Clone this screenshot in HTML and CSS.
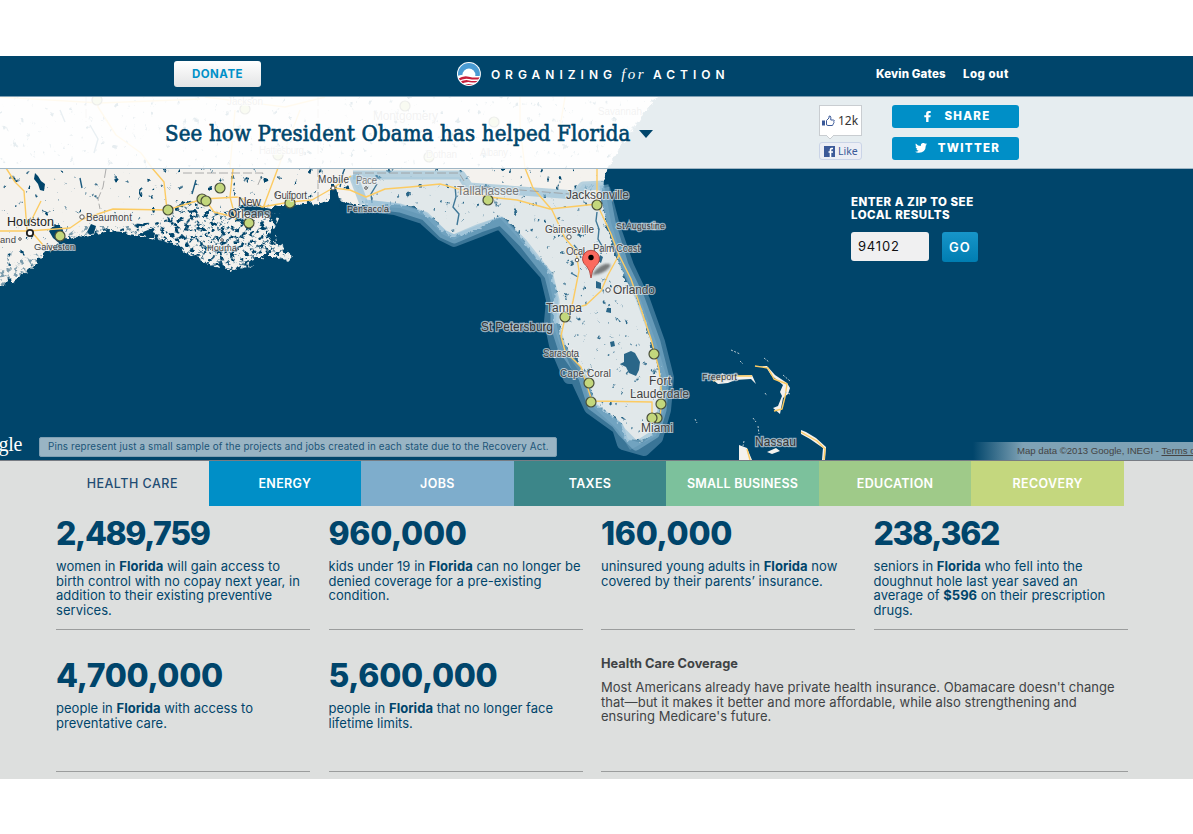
FILE: index.html
```html
<!DOCTYPE html>
<html lang="en">
<head>
<meta charset="utf-8">
<title>Organizing for Action</title>
<link rel="stylesheet" href="styles.css">
</head>
<body>
<header class="topbar">
  <a class="donate">DONATE</a>
  <div class="brand">
    <svg class="brand-mark" viewBox="0 0 24 24">
      <defs><clipPath id="disc"><circle cx="12" cy="12" r="11"/></clipPath></defs>
      <circle cx="12" cy="12" r="12" fill="#fff"/>
      <g clip-path="url(#disc)">
        <path d="M0 0h24v14H0z" fill="#4a9bd3"/>
        <circle cx="12" cy="13" r="6.500" fill="#fff"/>
        <path d="M0 14q6-2 12-.5t12 1v10H0z" fill="#fff"/>
        <path d="M0 17.500q6-4.500 12-2.800T24 15v2q-6 1.200-12 0T0 20zM1 21.500q6-4.500 11-3t12-.5v2q-6 1-11 .2T2 23.500zM6 24q3-2.500 8-1.700t8-1V24z" fill="#c8203c"/>
      </g>
    </svg>
    <span class="brand-word w1">ORGANIZING</span><span class="brand-for">for</span><span class="brand-word w2">ACTION</span>
  </div>
  <nav class="user"><a class="name">Kevin Gates</a><a>Log out</a></nav>
</header>

<section class="map-area">
  <svg class="map" viewBox="0 97 1193 363">
    <defs>
      <path id="landshape" d="M-20 80V294L0 287 12 282 27 272 36 263 44 255 53 248 61 244 57 237 49 230 56 224 63 232 70 240 85 235 105 231 125 232 142 236 155 239 170 243 180 247 190 255 203 259 209 266 222 265 230 271 245 264 258 256 275 256 287 262 293 256 280 248 270 242 266 232 275 225 270 218 262 210 272 206 290 206 305 204 320 203 329 200 332 185 336 185 340 200 352 204 372 207 395 204 410 206 425 214 435 220 443 231 452 238 460 235 470 232 483 226 497 217 505 219 515 227 525 243 537 260 547 266 552 278 556 290 555 300 550 314 556 322 562 325 560 335 568 350 578 362 582 372 590 385 592 400 605 412 620 424 625 440 640 441 652 436 657 420 662 395 660 370 652 345 645 320 637 300 624 280 620 265 612 245 605 220 602 200 604 175 609 168 618 150 629 135 642 115 657 97V80Z"/>
      <clipPath id="land"><use href="#landshape"/></clipPath>
      <filter id="rough" x="-2%" y="-2%" width="104%" height="104%">
        <feTurbulence type="fractalNoise" baseFrequency=".16" numOctaves="3" seed="4"/>
        <feDisplacementMap in="SourceGraphic" scale="9" xChannelSelector="R" yChannelSelector="G"/>
      </filter>
      <filter id="specks" x="0" y="0" width="100%" height="100%" color-interpolation-filters="sRGB">
        <feTurbulence type="fractalNoise" baseFrequency=".16 .12" numOctaves="4" seed="11"/>
        <feColorMatrix values="0 0 0 0 0  0 0 0 0 .27  0 0 0 0 .42  9 0 0 0 -6.300"/>
        <feComposite in2="SourceGraphic" operator="in"/>
      </filter>
      <filter id="marsh" x="0" y="0" width="100%" height="100%" color-interpolation-filters="sRGB">
        <feTurbulence type="fractalNoise" baseFrequency=".2 .22" numOctaves="4" seed="7"/>
        <feColorMatrix values="0 0 0 0 0  0 0 0 0 .27  0 0 0 0 .42  7 0 0 0 -3.600"/>
        <feComposite in2="SourceGraphic" operator="in"/>
      </filter>
      <filter id="islets" x="0" y="0" width="100%" height="100%" color-interpolation-filters="sRGB">
        <feTurbulence type="fractalNoise" baseFrequency=".2" numOctaves="4" seed="3"/>
        <feColorMatrix values="0 0 0 0 .93  0 0 0 0 .94  0 0 0 0 .93  8 0 0 0 -4.400"/>
        <feComposite in2="SourceGraphic" operator="in"/>
      </filter>
      <filter id="soft"><feGaussianBlur stdDeviation="1"/></filter>
    </defs>
    <rect y="97" width="1193" height="363" fill="#00456b"/>
    <use href="#landshape" fill="#f4f2ee" filter="url(#rough)"/>
    <path filter="url(#islets)" d="M195 240 268 212 281 214 273 232 284 246 292 258 284 264 270 255 250 268 230 269 214 267Z"/>
    <g clip-path="url(#land)">
      <path filter="url(#specks)" d="M0 97H670V450H0Z"/>
      <path filter="url(#marsh)" d="M130 224 160 222 180 200 195 206 225 212 250 205 290 204 300 270 200 270 140 238Z"/>
      <path filter="url(#marsh)" opacity=".5" d="M0 270 60 240 80 226 130 226 150 240 0 290Z"/>
    </g>
    <g class="lake">
      <path d="M35 173l3 3 3 5 4 3-1 7-4-1-2-6-4-5zM238 206q8-3 12-1 10-2 14 3 8 0 9 3-5 6-18 4-9 1-17-9zM49 231l7-3 6-1 3 11-6 5-6-5zM624 354l7-3 4 2 5 9-1 8-3 6-7-3-3-6-6-3 4-2zM610 342l4-1 1 5-4 1zM607 308l4 0 0 5-5-1zM596 281l5 2 0 6-5-1zM600 255l3 2-2 6-3-2zM143 232l5-2 7 3-1 5-7 0zM91 224l5 2-2 7-4 2-3-3zM330 188h6l4 14-1 7h-9z"/>
      <path class="river" d="M597 212l-1 9 3 8-1 10 4 7-1 8M455 186l1 11-3 10 6 7-2 11M340 187l3-14 2-5M574 245l5 6 2 7M571 273l7 4M377 184l-6 10 1 9M80 178l2 10M196 180l-4 14M60 110l5 12M90 125l8 14-4 14"/>
    </g>
    <g class="florida">
      <path class="state-fill" d="M350 177H460L468 187 575 194 583 184 604 183 611 222 624 265 640 298 656 342 667 378 664 410 656 436 630 450 618 430 590 404 582 375 560 345 553 325 553 300 547 270 520 240 500 218 480 225 454 240 442 234 425 216 400 208 365 206Z"/>
      <path class="band north" d="M353 175H461L469 187 575 195 583 186 604 185"/>
      <path class="band north" d="M353 175 364 204"/>
      <path class="band wide" d="M604 185 611 222 624 265 640 298 656 342 665 378 662 410 655 434 636 446 622 432 616 424 592 406 583 378 562 348 555 326 555 300 549 276 523 243 501 221 480 228 454 239 443 234 425 216 400 208 365 204"/>
      <path class="band outer" d="M604 188 614 226 628 266 644 300 659 342 668 378 665 410 657 438 644 450 623 444 618 428 590 408 576 378 569 378 555 345 550 322 552 300 546 275 521 247 500 223 480 231 454 241 442 235 423 218 395 209 368 206"/>
    </g>
    <g class="road">
      <path d="M0 231H28L70 228 83 219 113 209 167 210 203 199 238 197 262 207 290 202 312 200 333 188 350 190 366 197 385 189 410 187 440 184 455 188 488 197 517 200 550 209 597 204M6 168l9 14 9 9 3 39M31 231l12 14 10 4M29 225l12-24M152 168l12 14 3 28M204 198l10 14 20 5M233 169l-3 28 6 23M278 168l-15 40M333 188l18-12M525 168l8 20 19 22 13 28 11 13 3 20-6 30-4 17M597 168v36l14 30 8 21-11 20-7 16-15 14-20 5M619 255l12 24 20 60 8 30 3 28-2 20M565 318l-4 18 4 15 16 16 11 34 60 1v17M565 97l-5 30M520 97v30l5 41M98 97v10l18 28 25 18 11 15M205 97l80 10 40-10M235 110l-5 58M300 110l-22 58M0 97l100 6 100-4"/>
    </g>
    <path class="boundary" d="M106 169l-3 18-5 12 2 10M183 173h80l-6 14M318 168v36M353 173h106l5 8M470 186l100 8M86 97v25M318 97v60"/>
    <g class="isles">
      <path d="M712 379l8-1 2-5 4 3 26-1 4 9-5-5-16 1-7 3-10 1zM754 366l13 0 8 9 12 8 3 5-2 6-5 4-3 16-7-6 5-2 4-10-2-4 3-7-12-10-5-8zM739 445l8 3 5 12h-13zM767 452l9-4 4 3-8 3zM801 430l5 2 10 6 10 9-1 13h-3l1-12-13-9-9-5z"/>
      <path class="road" d="M713 381l15-5h24M755 366l13 2 6 11 13 5-2 13-3 12-8 2M747 449l3 11M801 432l16 9 8 8-1 11"/>
      <path class="cay" d="M731 350l9 4M764 358l5 4M783 375l7 6M785 392l5 2M765 393l2 3M695 419l2 4M753 418l3 4M758 426l1 8M744 441l-1 5M740 361l3 3"/>
    </g>
    <g class="pins">
      <circle cx="60" cy="236" r="5"/><circle cx="168" cy="210" r="5"/><circle cx="202" cy="199" r="5"/><circle cx="206" cy="201" r="5"/><circle cx="220" cy="188" r="5"/><circle cx="249" cy="223" r="5"/><circle cx="290" cy="203" r="5"/><circle cx="488" cy="200" r="5"/><circle cx="597" cy="205" r="5"/><circle cx="565" cy="317" r="5"/><circle cx="654" cy="354" r="5"/><circle cx="589" cy="383" r="5"/><circle cx="591" cy="402" r="5"/><circle cx="661" cy="404" r="5"/><circle cx="657" cy="418" r="5"/><circle cx="652" cy="418" r="5"/><circle cx="97" cy="100" r="5"/><circle cx="245" cy="109" r="5"/><circle cx="278" cy="155" r="5"/><circle cx="405" cy="106" r="5"/><circle cx="494" cy="122" r="5"/><circle cx="429" cy="157" r="5"/>
    </g>
    <g class="towns">
      <circle cx="30" cy="233" r="3.200" class="city"/><circle cx="82" cy="217" r="2.200"/><circle cx="53" cy="249" r="1.700"/><circle cx="20" cy="239" r="1.300"/><circle cx="333" cy="188" r="2"/><circle cx="569" cy="237" r="2.200"/><circle cx="577" cy="260" r="1.800"/><circle cx="608" cy="290" r="2.200"/><circle cx="222" cy="240" r="1.300"/><circle cx="366" cy="188" r="1.300"/>
    </g>
    <g class="labels">
      <text class="big" x="7" y="226" textLength="47">Houston</text>
      <text class="s" x="0" y="243" textLength="16">and</text>
      <text x="34" y="250" textLength="41" class="s">Galveston</text>
      <text x="86" y="221" textLength="46">Beaumont</text>
      <text x="207" y="251" textLength="30" class="s">Houma</text>
      <text class="mid" x="238" y="206" textLength="23">New</text>
      <text class="mid" x="228" y="218" textLength="42">Orleans</text>
      <text x="274" y="199" textLength="33">Gulfport</text>
      <text x="318" y="183" textLength="31">Mobile</text>
      <text class="faded" x="356" y="184" textLength="21">Pace</text>
      <text class="sea s" x="347" y="212" textLength="42">Pensacola</text>
      <text class="mid faded" x="457" y="195" textLength="62">Tallahassee</text>
      <text class="mid" x="566" y="199" textLength="63">Jacksonville</text>
      <text x="545" y="233" textLength="49">Gainesville</text>
      <text class="sea s" x="616" y="229" textLength="49">St Augustine</text>
      <text x="566" y="255" textLength="19">Ocal</text>
      <text x="593" y="252" textLength="47">Palm Coast</text>
      <text class="mid" x="613" y="294" textLength="42">Orlando</text>
      <text class="mid" x="546" y="312" textLength="36">Tampa</text>
      <text class="sea mid" x="481" y="331" textLength="72">St Petersburg</text>
      <text x="543" y="357" textLength="36">Sarasota</text>
      <text x="560" y="377" textLength="51">Cape Coral</text>
      <text class="mid" x="649" y="385" textLength="22">Fort</text>
      <text class="mid" x="630" y="398" textLength="59">Lauderdale</text>
      <text class="mid" x="641" y="432" textLength="32">Miami</text>
      <text class="sea s" x="702" y="380" textLength="35">Freeport</text>
      <text class="sea mid" x="755" y="446" textLength="41">Nassau</text>
      <text class="faded" x="227" y="105" textLength="36">Jackson</text>
      <text class="mid faded" x="373" y="120" textLength="65">Montgomery</text>
      <text class="faded" x="259" y="154" textLength="45">Hattiesburg</text>
      <text class="faded" x="426" y="158" textLength="31">Dothan</text>
      <text class="faded" x="480" y="156" textLength="28">Albany</text>
      <text class="faded" x="598" y="115" textLength="44">Savannah</text>
    </g>
    <g>
      <path d="M591 277q5-10 14-13 8-1 4 4-6 6-16 7z" fill="#222" opacity=".55" filter="url(#soft)"/>
      <path d="M591 278q-.8-8-4.500-12a8.500 8.500 0 1 1 9 0q-3.700 4-4.500 12z" fill="#fb6a5e" stroke="#a6332c" stroke-width=".8"/>
      <circle cx="591" cy="257.500" r="2.700"/>
    </g>
  </svg>

  <div class="strip">
    <h1 class="title">See how President Obama has helped Florida</h1>
    <span class="caret"></span>
    <div class="like">
      <div class="count">
        <svg viewBox="0 0 13 12" width="13" height="12"><path d="M4.500 5.500 7 3V1.200q1.500-.8 1.800 1V5h3q1 .8 0 1.500.6 1-.3 1.600.3 1-.5 1.400 0 1-1 1H6l-1.500-.6z" fill="#fff" stroke="#3b5998"/><path d="M0 5.500h3v5H0z" fill="#3b5998"/></svg>
        <span>12k</span>
        <svg class="notch" viewBox="0 0 8 5" width="8" height="5"><path d="M0 0l4 4 4-4" fill="#fff" stroke="#c9cdd1"/></svg>
      </div>
      <div class="like-button">
        <svg viewBox="0 0 11 11" width="11" height="11"><path d="M0 0h11v11H0z" fill="#3b5998"/><path d="M7.300 11V6.800H9V5.200H7.300V4q0-.8.8-.8H9V1.800H7.600Q5.700 1.800 5.700 3.700v1.500H4.500v1.600h1.200V11z" fill="#fff"/></svg>
        <span>Like</span>
      </div>
    </div>
    <div class="social">
      <a class="social-button"><svg viewBox="0 0 7 12" width="7" height="11"><path d="M2 12V6.700H0V4.500h2V3q0-3 2.800-3H7v2.200H5.500q-.9 0-.9 1v1.300H7l-.3 2.200H4.600V12z" fill="#fff"/></svg><span>SHARE</span></a>
      <a class="social-button"><svg viewBox="0 0 24 20" width="12" height="10"><path d="M24 2.400q-1.300.6-2.800.8Q22.700 2.200 23.300.5q-1.500.9-3.100 1.200A4.900 4.900 0 0 0 11.800 6.200Q5.500 6 1.700 1 0 5 3.200 7.600q-1.200 0-2.200-.6.200 3.800 4 4.800-1 .3-2.200.1Q4 15 7.400 15.300 4.300 17.700 0 17.300 4 20 7.600 19.500 21.500 19 21.600 5q1.500-1.100 2.400-2.600z" fill="#fff"/></svg><span>TWITTER</span></a>
    </div>
  </div>

  <form class="zip">
    <div class="zip-label">ENTER A ZIP TO SEE<br>LOCAL RESULTS</div>
    <div class="zip-row"><span class="zip-input">94102</span><a class="go">GO</a></div>
  </form>

  <div class="google">ogle</div>
  <div class="note"><span>Pins represent just a small sample of the projects and jobs created in each state due to the Recovery Act.</span></div>
  <div class="credit">Map data ©2013 Google, INEGI - <u>Terms o</u></div>
</section>

<main class="content">
  <nav class="tabs">
    <a class="tab active">HEALTH CARE</a><a class="tab energy">ENERGY</a><a class="tab jobs">JOBS</a><a class="tab taxes">TAXES</a><a class="tab business">SMALL BUSINESS</a><a class="tab education">EDUCATION</a><a class="tab recovery">RECOVERY</a>
  </nav>
  <div class="stats">
    <article class="stat"><h2 class="tight">2,489,759</h2><p>women in <b>Florida</b> will gain access to<br>birth control with no copay next year, in<br>addition to their existing preventive<br>services.</p></article>
    <article class="stat"><h2>960,000</h2><p>kids under 19 in <b>Florida</b> can no longer be<br>denied coverage for a pre-existing<br>condition.</p></article>
    <article class="stat"><h2>160,000</h2><p>uninsured young adults in <b>Florida</b> now<br>covered by their parents’ insurance.</p></article>
    <article class="stat"><h2 class="tight">238,362</h2><p>seniors in <b>Florida</b> who fell into the<br>doughnut hole last year saved an<br>average of <b>$596</b> on their prescription<br>drugs.</p></article>
    <article class="stat"><h2>4,700,000</h2><p>people in <b>Florida</b> with access to<br>preventative care.</p></article>
    <article class="stat"><h2>5,600,000</h2><p>people in <b>Florida</b> that no longer face<br>lifetime limits.</p></article>
    <article class="stat about"><h3>Health Care Coverage</h3><p>Most Americans already have private health insurance. Obamacare doesn't change<br>that—but it makes it better and more affordable, while also strengthening and<br>ensuring Medicare's future.</p></article>
  </div>
</main>
</body>
</html>
```
FILE: styles.css
```css
* { box-sizing: border-box; }
body {
  margin: 0;
  padding-top: 56px;
  width: 1193px;
  height: 834px;
  overflow: hidden;
  background: #fff;
  font-family: Inter, "Liberation Sans", sans-serif;
  color: #00456b;
}
a { text-decoration: none; color: inherit; white-space: nowrap; }

.topbar {
  display: flex;
  align-items: flex-start;
  height: 41px;
  padding: 5px 0 0 174px;
  background: #00456b;
  border-bottom: 1px solid #7f9fb3;
}
.donate {
  width: 87px;
  height: 26px;
  border-radius: 3px;
  background: linear-gradient(#fff, #e3e4e5);
  color: #0090c8;
  font-size: 11.500px;
  font-weight: 700;
  letter-spacing: .5px;
  line-height: 26px;
  text-align: center;
}
.brand {
  display: flex;
  align-items: center;
  width: 272px;
  height: 26px;
  margin-left: 196px;
  color: #fff;
}
.brand-mark { width: 24px; height: 24px; margin-right: 10px; }
.brand-word { font-size: 12px; font-weight: 600; letter-spacing: 5px; white-space: nowrap; }
.w1 { width: 131px; }
.w2 { width: 76px; }
.brand-for {
  width: 32px;
  font: italic 15px "Liberation Serif", serif;
  letter-spacing: 2.500px;
}
.user {
  display: flex;
  margin-left: 147px;
  color: #fff;
  font-size: 11.500px;
  font-weight: 800;
  line-height: 26px;
  letter-spacing: .15px;
}
.name { width: 87px; }
.name + a { letter-spacing: .5px; }

.map-area { position: relative; height: 364px; border-bottom: 1px solid #777c83; background: #00456b; }
.map { display: block; width: 1193px; height: 363px; }
.lake { fill: #00456b; }
.river { fill: none; stroke: #1d5c80; stroke-width: 1.400; }
.state-fill { fill: #a9cde0; opacity: .25; }
.band { fill: none; stroke-linejoin: round; }
.north { stroke: #8dbad4; stroke-width: 9; opacity: .6; }
.wide { stroke: #8dbad4; stroke-width: 9; opacity: .55; }
.outer { stroke: #8ab8d4; stroke-width: 12; opacity: .42; }
.road path, path.road { fill: none; stroke: #fccb62; stroke-width: 1.400; stroke-linejoin: round; }
.cay { fill: none; stroke: #b9c9d0; stroke-width: 1; stroke-dasharray: 2 1.500; }
.boundary { fill: none; stroke: #999; stroke-width: .8; stroke-dasharray: 9 3; }
.isles { fill: #f4f2ee; }
.pins { fill: #c3d77c; stroke: #4a4f3a; stroke-width: 1.200; }
.towns { fill: #fff; stroke: #555; stroke-width: 1; }
.city { stroke: #222; stroke-width: 1.800; }
.labels {
  font-family: "Liberation Sans", sans-serif;
  font-size: 10px;
  fill: #444;
  stroke: rgba(244, 244, 244, .65);
  stroke-width: 2px;
  paint-order: stroke;
}
.labels .s { font-size: 9.500px; }
.labels .mid { font-size: 12px; }
.labels .big { font-size: 12.500px; fill: #222; }
.labels .sea { fill: #333; stroke: rgba(215, 222, 227, .7); stroke-width: 2.400px; }
.labels .faded { fill: #777; }

.strip {
  position: absolute;
  inset: 0 0 auto 0;
  display: flex;
  height: 72px;
  padding-left: 165px;
  background: rgba(255, 255, 255, .9);
  border-bottom: 1px solid #9fb6c5;
}
.title {
  width: 474px;
  margin: 23px 0 0;
  font: 400 22px/28px "DejaVu Serif Condensed", "DejaVu Serif", serif;
  letter-spacing: .17px;
  white-space: nowrap;
  -webkit-text-stroke: .6px #00456b;
}
.caret {
  width: 14px;
  height: 8px;
  margin-top: 33px;
  background: #00456b;
  clip-path: polygon(0 0, 100% 0, 50% 100%);
}
.like { width: 43px; margin: 8px 0 0 166px; }
.count {
  position: relative;
  display: flex;
  align-items: center;
  gap: 3px;
  height: 31px;
  padding-left: 2px;
  border: 1px solid #c9cdd1;
  background: #fff;
  color: #333;
  font: 12px "Noto Sans", sans-serif;
}
.notch { position: absolute; left: 6px; top: 29px; }
.like-button {
  display: flex;
  align-items: center;
  gap: 3px;
  height: 18px;
  margin-top: 6px;
  padding-left: 4px;
  border: 1px solid #cad4e7;
  border-radius: 3px;
  background: #eceef5;
  color: #3b5998;
  font: 10.500px "Noto Sans", sans-serif;
}
.social { display: flex; flex-direction: column; gap: 9px; margin: 8px 0 0 30px; }
.social-button {
  display: flex;
  align-items: center;
  justify-content: center;
  gap: 13px;
  width: 127px;
  height: 23px;
  padding: 0 0 1px 4px;
  border-radius: 3px;
  background: #008fc7;
  color: #fff;
  font-size: 11.500px;
  font-weight: 800;
  letter-spacing: 1.300px;
}
.social-button + .social-button { gap: 11px; }

.zip { position: absolute; left: 851px; top: 99px; color: #fff; }
.zip-label { font-size: 11.500px; font-weight: 800; line-height: 13px; letter-spacing: .5px; white-space: nowrap; }
.zip-row { display: flex; gap: 13px; margin-top: 10px; }
.zip-input {
  width: 78px;
  height: 29px;
  padding-left: 7px;
  border-radius: 3px;
  background: #f0f0f1;
  color: #111;
  font-size: 13px;
  line-height: 28px;
  letter-spacing: .8px;
}
.go {
  width: 36px;
  height: 30px;
  border-radius: 3px;
  background: linear-gradient(#1795c9, #007db1);
  font-size: 13px;
  font-weight: 600;
  line-height: 30px;
  text-align: center;
  letter-spacing: 1.200px;
}
.google {
  position: absolute;
  right: 1171px;
  bottom: 4px;
  color: #fff;
  font: 20px/24px "Liberation Serif", serif;
  letter-spacing: -.3px;
}
.note {
  position: absolute;
  left: 39px;
  top: 340px;
  width: 518px;
  height: 20px;
  padding-left: 8px;
  border: 1px solid #7f9fb3;
  border-radius: 2px;
  background: #99b4c4;
  color: #1b5578;
  font-size: 9.800px;
  line-height: 18px;
  letter-spacing: .14px;
  white-space: nowrap;
}
.credit {
  position: absolute;
  right: 0;
  bottom: 0;
  width: 220px;
  height: 18px;
  padding-left: 44px;
  overflow: hidden;
  background: linear-gradient(90deg, rgba(127, 162, 181, 0), #7fa2b5 50px);
  color: #444;
  font: 9.600px/18px "Liberation Sans", sans-serif;
  white-space: nowrap;
}

.content { height: 318px; background: #dddfde; }
.tabs { display: grid; grid-template-columns: repeat(7, 1fr); width: 1068px; height: 45px; margin-left: 56px; }
.tab {
  color: #fff;
  font-size: 12.500px;
  font-weight: 600;
  line-height: 45px;
  letter-spacing: .35px;
  text-align: center;
}
.active { color: #1f4c73; font-weight: 500; letter-spacing: .5px; }
.energy { background: #008fc7; }
.jobs { background: #7eadcc; }
.taxes { background: #3c8689; }
.business { background: #7cc19c; letter-spacing: .2px; }
.education { background: #9fca89; }
.recovery { background: #c4d77e; }

.stats { display: grid; grid-template-columns: repeat(4, 254px); column-gap: 18.500px; row-gap: 18px; margin-left: 56px; }
.stat { height: 124px; padding-top: 9px; border-bottom: 1px solid #9b9d9d; }
.stat h2 {
  margin: 0 0 7px;
  font-size: 32px;
  font-weight: 800;
  line-height: 37px;
  letter-spacing: -.3px;
  white-space: nowrap;
}
.stat .tight { letter-spacing: -1.400px; }
.stat p { margin: 0; font-size: 13px; line-height: 14.600px; letter-spacing: .03px; white-space: nowrap; }
.about { grid-column: span 2; width: 527px; color: #3f4345; }
.about h3 { margin: 0 0 9px; font-size: 12.800px; line-height: 14px; }
```
